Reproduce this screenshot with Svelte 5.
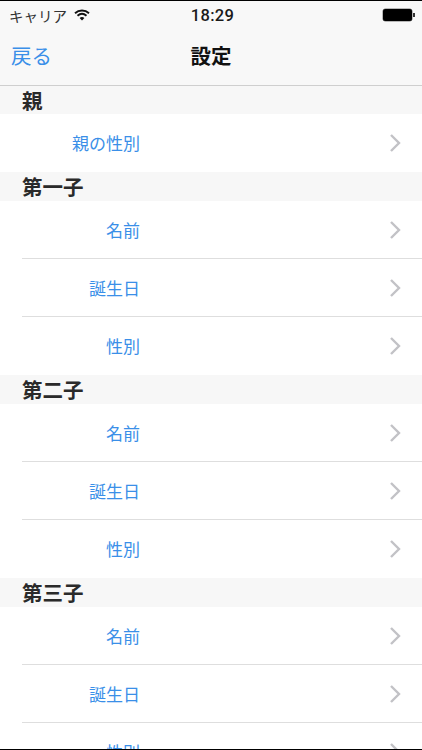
<script>
  const children = ['第一子', '第二子', '第三子'];
  const fields = ['名前', '誕生日', '性別'];
  const sections = [
    { title: '親', rows: ['親の性別'] },
    ...children.map((title) => ({ title, rows: fields }))
  ];
</script>

<div class="phone">
  <header class="top">
    <div class="status">
      <div class="carrier">
        <span>キャリア</span>
        <svg class="wifi" width="16" height="12" viewBox="0 0 16 12" aria-hidden="true">
          <path d="M1 4.2C5 .6 11 .6 15 4.2" fill="none" stroke="#111" stroke-width="1.900" />
          <path d="M3.5 6.7C6.2 4.4 9.8 4.4 12.5 6.7" fill="none" stroke="#111" stroke-width="1.900" />
          <path d="M8 11.5 5.6 8.900C7 7.800 9 7.800 10.400 8.900Z" fill="#111" />
        </svg>
      </div>
      <div class="time">18:29</div>
      <div class="battery-wrap">
        <div class="battery"></div>
        <div class="nub"></div>
      </div>
    </div>
    <nav class="nav">
      <span class="back">戻る</span>
      <span class="title">設定</span>
    </nav>
  </header>
  <main class="list">
    {#each sections as section}
      <h2 class="section-title">{section.title}</h2>
      {#each section.rows as row}
        <div class="row">
          <span class="label">{row}</span>
          <svg class="chevron" width="12" height="20" viewBox="0 0 12 20" aria-hidden="true">
            <path d="M2 2 10 10 2 18" fill="none" stroke="#c2c2c6" stroke-width="2.400" />
          </svg>
        </div>
      {/each}
    {/each}
  </main>
</div>

<style>
  :global(body) {
    margin: 0;
    background: #fff;
  }
  .phone {
    height: 750px;
    box-sizing: border-box;
    border-top: 1px solid #000;
    border-bottom: 1px solid #000;
    display: flex;
    flex-direction: column;
    overflow: hidden;
    font-family: "Liberation Sans", "Noto Sans CJK JP", sans-serif;
    background: #fff;
  }
  .top {
    flex: none;
    height: 85px;
    box-sizing: border-box;
    background: #f8f8f8;
    border-bottom: 1px solid #cfcfcf;
  }
  .status {
    height: 28px;
    display: grid;
    grid-template-columns: 1fr auto 1fr;
    align-items: center;
    padding: 0 7px 0 9px;
    color: #111;
  }
  .carrier {
    display: flex;
    align-items: center;
    gap: 7px;
    font-size: 14.500px;
    color: #333;
  }
  .wifi {
    margin-top: -1px;
  }
  .time {
    font-family: Roboto, "Liberation Sans", sans-serif;
    font-size: 16.500px;
    font-weight: 500;
    letter-spacing: 0.300px;
    color: #1a1a1a;
    padding-left: 1px;
  }
  .battery-wrap {
    display: flex;
    align-items: center;
    justify-content: flex-end;
    gap: 1px;
  }
  .battery {
    width: 29px;
    height: 12px;
    background: #000;
    border-radius: 2.500px;
    box-shadow: 0 0 0 0.500px #777;
  }
  .nub {
    width: 2px;
    height: 4px;
    background: #333;
  }
  .nav {
    position: relative;
    height: 56px;
    box-sizing: border-box;
    padding-bottom: 4px;
    display: flex;
    align-items: center;
    justify-content: center;
  }
  .back {
    position: absolute;
    left: 11px;
    font-size: 20.500px;
    color: #3a8fe8;
  }
  .title {
    font-size: 20.500px;
    font-weight: 700;
    color: #111;
  }
  .list {
    flex: 1;
    min-height: 0;
    overflow: hidden;
  }
  .section-title {
    margin: 0;
    height: 29px;
    box-sizing: border-box;
    padding: 2px 0 0 22px;
    background: #f7f7f7;
    font-size: 20.500px;
    font-weight: 700;
    line-height: 28px;
    color: #2a2a2a;
  }
  .list > .section-title:first-child {
    height: 28px;
    line-height: 28px;
  }
  .row {
    height: 58px;
    box-sizing: border-box;
    margin-left: 22px;
    padding-right: 21px;
    border-bottom: 1px solid #dedede;
    display: flex;
    align-items: center;
    background: #fff;
  }
  .row:has(+ .section-title) {
    border-bottom-color: transparent;
  }
  .label {
    width: 118px;
    text-align: right;
    font-size: 17px;
    color: #3a8fe8;
  }
  .chevron {
    margin-left: auto;
  }
</style>
